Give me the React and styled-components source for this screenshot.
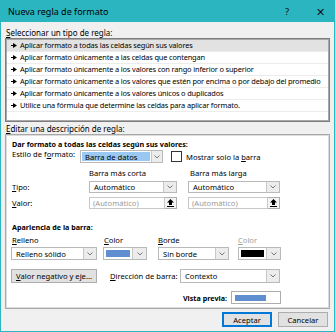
import React from "react";
import styled, { createGlobalStyle } from "styled-components";

const TEAL = "#2bb5c1";

const GlobalStyle = createGlobalStyle`
  html, body {
    margin: 0;
    padding: 0;
    background: #ffffff;
  }
  body {
    font-family: "Noto Sans", "Open Sans", "Liberation Sans", sans-serif;
    font-size: 7.6px;
    color: #000;
  }
`;

const rules = [
  "Aplicar formato a todas las celdas según sus valores",
  "Aplicar formato únicamente a las celdas que contengan",
  "Aplicar formato únicamente a los valores con rango inferior o superior",
  "Aplicar formato únicamente a los valores que estén por encima o por debajo del promedio",
  "Aplicar formato únicamente a los valores únicos o duplicados",
  "Utilice una fórmula que determine las celdas para aplicar formato.",
];

const Arrow = () => (
  <ArrowIcon width="6" height="5" viewBox="0 0 6 5">
    <rect x="0" y="2" width="3" height="1" fill="#000" />
    <polygon points="2,0 6,2.5 2,5" fill="#000" />
  </ArrowIcon>
);

const Chevron = () => (
  <svg width="6" height="4" viewBox="0 0 6 4">
    <polyline points="0.5,0.5 3,3 5.5,0.5" fill="none" stroke="#7a7a7a" strokeWidth="1" />
  </svg>
);

const UploadIcon = () => (
  <svg width="7" height="8" viewBox="0 0 7 8">
    <polygon points="3.5,0 7,3.5 5,3.5 5,6 2,6 2,3.5 0,3.5" fill="#000" />
    <rect x="0" y="7" width="7" height="1" fill="#000" />
  </svg>
);

const Combo = ({ width, value, selected, swatch, arrow = 12 }) => (
  <ComboBox $w={width}>
    {swatch ? (
      <Swatch $color={swatch} />
    ) : (
      <ComboValue $selected={selected}>{value}</ComboValue>
    )}
    <ComboArrow $w={arrow}>
      <Chevron />
    </ComboArrow>
  </ComboBox>
);

const SpinInput = ({ width }) => (
  <InputWrap $w={width}>
    <InputField>(Automático)</InputField>
    <PickButton>
      <UploadIcon />
    </PickButton>
  </InputWrap>
);

export default function App() {
  return (
    <>
      <GlobalStyle />
      <Window>
        <TitleBar>
          <Title>Nueva regla de formato</Title>
          <TitleButton $w={22} $mr={7}>
            ?
          </TitleButton>
          <TitleButton $w={30} $big>
            ✕
          </TitleButton>
        </TitleBar>
        <Content>
          <SectionLabel>
            <u>S</u>eleccionar un tipo de regla:
          </SectionLabel>
          <ListBox>
            {rules.map((r, i) => (
              <RuleRow key={i} $active={i === 0}>
                <Arrow />
                <span>{r}</span>
              </RuleRow>
            ))}
          </ListBox>
          <SectionLabel $edit>
            <u>E</u>ditar una descripción de regla:
          </SectionLabel>
          <Panel>
            <Heading>Dar formato a todas las celdas según sus valores:</Heading>
            <Row $h={13}>
              <FieldLabel $w={68} $top>
                Estilo de f<u>o</u>rmato:
              </FieldLabel>
              <Combo width={83} value="Barra de datos" selected arrow={10} />
              <CheckBox />
              <span>
                Mostrar solo la <u>b</u>arra
              </span>
            </Row>
            <Row $h={12} $mt={4}>
              <Spacer $w={77} />
              <ColCaption $w={101}>Barra más corta</ColCaption>
              <ColCaption>Barra más larga</ColCaption>
            </Row>
            <Row $h={12} $mt={2}>
              <FieldLabel $w={77}>
                <u>T</u>ipo:
              </FieldLabel>
              <Combo width={88} value="Automático" />
              <Spacer $w={11} />
              <Combo width={92} value="Automático" />
            </Row>
            <Row $h={12} $mt={4}>
              <FieldLabel $w={77}>
                <u>V</u>alor:
              </FieldLabel>
              <SpinInput width={88} />
              <Spacer $w={11} />
              <SpinInput width={92} />
            </Row>
            <Heading $mt={13}>Apariencia de la barra:</Heading>
            <Row $h={11} $mt={1}>
              <ColCaption $w={92}>
                <u>R</u>elleno
              </ColCaption>
              <ColCaption $w={54}>
                <u>C</u>olor
              </ColCaption>
              <ColCaption $w={80}>
                <u>B</u>orde
              </ColCaption>
              <ColCaption $disabled>
                <u>C</u>olor
              </ColCaption>
            </Row>
            <Row $h={13} $mt={2} $ml={-1}>
              <Combo width={86} value="Relleno sólido" />
              <Spacer $w={6} />
              <Combo width={44} swatch="#5f8fd0" arrow={13} />
              <Spacer $w={11} />
              <Combo width={71} value="Sin borde" />
              <Spacer $w={9} />
              <Combo width={43} swatch="#000000" arrow={13} />
            </Row>
            <Row $h={14} $mt={9} $ml={-1}>
              <PushButton $w={86}>
                <u>V</u>alor negativo y eje...
              </PushButton>
              <FieldLabel $w={83} $pl={13}>
                <u>D</u>irección de barra:
              </FieldLabel>
              <Combo width={100} value="Contexto" />
            </Row>
            <PreviewRow>
              <strong>Vista previa:</strong>
              <PreviewBox>
                <PreviewBar />
              </PreviewBox>
            </PreviewRow>
          </Panel>
          <Footer>
            <DialogButton $primary>Aceptar</DialogButton>
            <DialogButton>Cancelar</DialogButton>
          </Footer>
        </Content>
      </Window>
    </>
  );
}

const Window = styled.div`
  width: 335px;
  height: 332px;
  box-sizing: border-box;
  background: #f0f0f0;
  border: 1px solid ${TEAL};
  border-top: none;
  display: flex;
  flex-direction: column;
`;

const TitleBar = styled.div`
  height: 22px;
  margin: 0 -1px;
  background: ${TEAL};
  display: flex;
  align-items: center;
  padding-left: 8px;
  font-size: 9px;
`;

const Title = styled.div`
  flex: 1;
`;

const TitleButton = styled.div`
  width: ${(p) => p.$w}px;
  margin-right: ${(p) => p.$mr || 0}px;
  text-align: center;
  font-size: ${(p) => (p.$big ? 11 : 9.5)}px;
  color: #111;
`;

const Content = styled.div`
  flex: 1;
  display: flex;
  flex-direction: column;
  padding: 0 4px;
`;

const SectionLabel = styled.div`
  font-size: 8px;
  line-height: 11px;
  height: 11px;
  padding-top: ${(p) => (p.$edit ? 1 : 5)}px;
  padding-left: 1px;
`;

const ListBox = styled.div`
  height: 84px;
  box-sizing: border-box;
  background: #fff;
  border: 1px solid #7d7d7d;
  box-shadow: inset 0 0 0 1px #a9a9a9;
  padding: 1px;
  display: flex;
  flex-direction: column;
`;

const RuleRow = styled.div`
  height: 11px;
  border-bottom: 1px solid #ececec;
  background: ${(p) => (p.$active ? "#e2e2e2" : "transparent")};
  display: flex;
  align-items: center;
  gap: 3px;
  padding-left: 4px;
  white-space: nowrap;
  line-height: 11px;
  font-size: 7.4px;
  letter-spacing: -0.15px;
`;

const ArrowIcon = styled.svg`
  flex-shrink: 0;
`;

const Panel = styled.div`
  height: 175px;
  box-sizing: border-box;
  background: #fff;
  border: 1px solid #a8a8a8;
  box-shadow: inset 0 0 0 1px #dcdcdc;
  padding: 4px 6px 0;
  display: flex;
  flex-direction: column;
`;

const Heading = styled.div`
  font-weight: 700;
  font-size: 7.2px;
  line-height: 11px;
  margin-top: ${(p) => p.$mt || 0}px;
`;

const Row = styled.div`
  display: flex;
  align-items: center;
  height: ${(p) => p.$h}px;
  margin-top: ${(p) => p.$mt || 0}px;
  margin-left: ${(p) => p.$ml || 0}px;
  white-space: nowrap;
`;

const FieldLabel = styled.div`
  width: ${(p) => p.$w}px;
  padding-left: ${(p) => p.$pl || 0}px;
  box-sizing: border-box;
  flex-shrink: 0;
  align-self: ${(p) => (p.$top ? "flex-start" : "auto")};
  line-height: ${(p) => (p.$top ? "8px" : "normal")};
`;

const ColCaption = styled.div`
  width: ${(p) => (p.$w ? `${p.$w}px` : "auto")};
  flex-shrink: 0;
  color: ${(p) => (p.$disabled ? "#a0a0a0" : "#000")};
`;

const Spacer = styled.div`
  width: ${(p) => p.$w}px;
  flex-shrink: 0;
`;

const ComboBox = styled.div`
  width: ${(p) => p.$w}px;
  height: 100%;
  box-sizing: border-box;
  flex-shrink: 0;
  border: 1px solid #b9b9b9;
  background: #fff;
  display: flex;
`;

const ComboValue = styled.div`
  flex: 1;
  margin: 1px;
  padding-left: 3px;
  display: flex;
  align-items: center;
  background: ${(p) => (p.$selected ? "#99c9f3" : "transparent")};
  overflow: hidden;
`;

const Swatch = styled.div`
  flex: 1;
  margin: 2px;
  background: ${(p) => p.$color};
`;

const ComboArrow = styled.div`
  width: ${(p) => p.$w}px;
  border-left: 1px solid #c8c8c8;
  background: #ececec;
  display: flex;
  align-items: center;
  justify-content: center;
`;

const CheckBox = styled.div`
  width: 9px;
  height: 9px;
  border: 1px solid #333;
  background: #fff;
  margin: 0 4px 0 8px;
  align-self: flex-start;
  margin-top: 1px;
  flex-shrink: 0;
`;

const InputWrap = styled.div`
  width: ${(p) => p.$w}px;
  height: 100%;
  flex-shrink: 0;
  display: flex;
`;

const InputField = styled.div`
  flex: 1;
  border: 1px solid #c8c8c8;
  padding-left: 3px;
  color: #9a9a9a;
  display: flex;
  align-items: center;
`;

const PickButton = styled.div`
  width: 12px;
  box-sizing: border-box;
  border: 1px solid #adadad;
  border-left: none;
  background: #f4f4f4;
  display: flex;
  align-items: center;
  justify-content: center;
`;

const PushButton = styled.div`
  width: ${(p) => p.$w}px;
  height: 100%;
  box-sizing: border-box;
  flex-shrink: 0;
  border: 1px solid #adadad;
  background: #e1e1e1;
  display: flex;
  align-items: center;
  justify-content: center;
`;

const PreviewRow = styled.div`
  display: flex;
  align-items: center;
  justify-content: flex-end;
  gap: 4px;
  height: 13px;
  margin-top: 8px;
  padding-right: 42px;
  strong {
    font-weight: 700;
    font-size: 7.2px;
  }
`;

const PreviewBox = styled.div`
  width: 50px;
  height: 13px;
  box-sizing: border-box;
  border: 1px solid #adadad;
  background: #fff;
  display: flex;
  align-items: center;
  padding-left: 3px;
`;

const PreviewBar = styled.div`
  width: 31px;
  height: 6px;
  background: #5f8fd0;
`;

const Footer = styled.div`
  display: flex;
  justify-content: flex-end;
  gap: 6px;
  padding: 3px 2px 0 0;
`;

const DialogButton = styled.div`
  width: 50px;
  height: 15px;
  box-sizing: border-box;
  border: 1px solid ${(p) => (p.$primary ? "#0078d7" : "#adadad")};
  box-shadow: ${(p) => (p.$primary ? "inset 0 0 0 1px #0078d7" : "none")};
  background: #e1e1e1;
  display: flex;
  align-items: center;
  justify-content: center;
`;
